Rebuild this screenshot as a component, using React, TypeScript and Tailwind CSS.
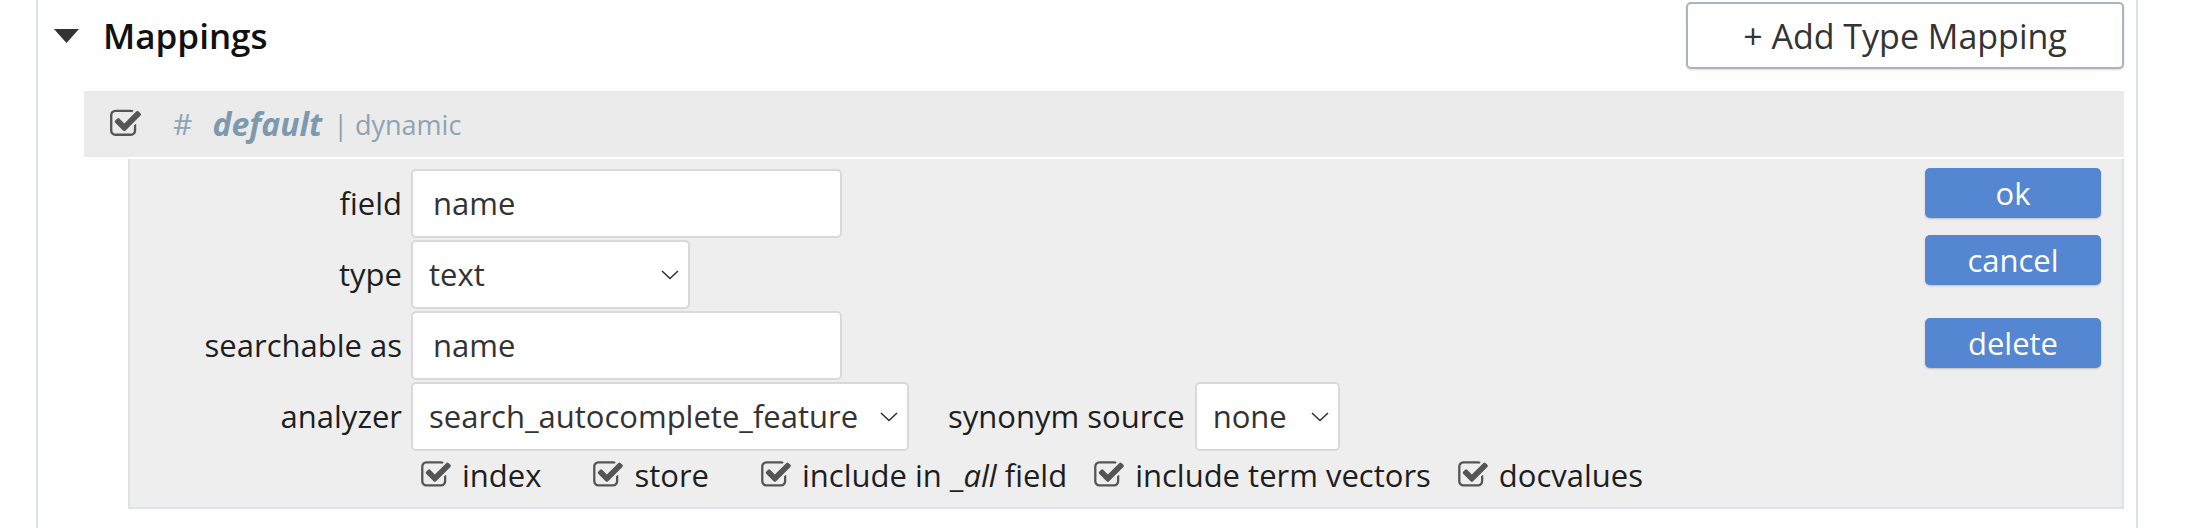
import React from "react";

const CheckSquare = ({ className }: { className?: string }) => (
  <svg viewBox="0 0 1664 1792" className={className} fill="currentColor">
    <path d="M1408 930v318q0 119-84.5 203.5t-203.5 84.5h-832q-119 0-203.5-84.5t-84.5-203.5v-832q0-119 84.5-203.5t203.5-84.5h832q63 0 117 25 15 7 18 23 3 17-9 29l-49 49q-10 10-23 10-3 0-9-2-23-6-45-6h-832q-66 0-113 47t-47 113v832q0 66 47 113t113 47h832q66 0 113-47t47-113v-254q0-13 9-22l64-64q10-10 23-10 6 0 12 3 20 8 20 29zm231-489l-814 814q-24 24-57 24t-57-24l-430-430q-24-24-24-57t24-57l110-110q24-24 57-24t57 24l263 263 647-647q24-24 57-24t57 24l110 110q24 24 24 57t-24 57z" />
  </svg>
);

const Chevron = () => (
  <svg width="18" height="10" viewBox="0 0 18 10" className="shrink-0">
    <path d="M1 1 L9 8.5 L17 1" fill="none" stroke="#333" strokeWidth="1.6" />
  </svg>
);

const Label = ({ children }: { children: React.ReactNode }) => (
  <div className="flex items-center justify-end text-[31px] text-[#1e1e1e] leading-none">{children}</div>
);

const TextBox = ({ value, w }: { value: string; w: string }) => (
  <div className={`${w} h-[69px] bg-white border-2 border-[#d9d9d9] rounded-[5px] flex items-center pl-[20px] text-[31px] text-[#333] leading-none`}>
    {value}
  </div>
);

const SelectBox = ({ value, w }: { value: string; w: string }) => (
  <div className={`${w} h-[69px] bg-white border-2 border-[#d9d9d9] rounded-[5px] flex items-center justify-between pl-[16px] pr-[9px] text-[31px] text-[#333] leading-none`}>
    <span>{value}</span>
    <Chevron />
  </div>
);

const Check = ({ children, mr }: { children: React.ReactNode; mr: string }) => (
  <div className={`flex items-center ${mr}`}>
    <CheckSquare className="w-[30px] h-[32px] text-[#555]" />
    <span className="ml-[11px] text-[31px] text-[#1e1e1e] leading-none">{children}</span>
  </div>
);

export default function App() {
  return (
    <div className="w-[2200px] h-[528px] bg-white overflow-hidden font-['Open_Sans',sans-serif]">
      <div className="ml-[36px] w-[2102px] h-[528px] border-x-2 border-[#dde1ea] pr-[12px]">
        <div className="flex items-center pt-[2px]">
          <svg width="25" height="14" viewBox="0 0 25 14" className="ml-[16px]">
            <polygon points="0,0 25,0 12.5,14" fill="#333" />
          </svg>
          <span className="ml-[24px] text-[35px] font-semibold text-[#111] leading-none">Mappings</span>
          <button className="ml-auto w-[438px] h-[67px] bg-white border-2 border-[#aab3c0] rounded-[5px] shadow-[0_1px_2px_rgba(0,0,0,0.15)] text-[34px] text-[#333] leading-none">
            + Add Type Mapping
          </button>
        </div>

        <div className="ml-[46px] mt-[22px]">
          <div className="h-[66px] bg-[#ebebeb] flex items-center pl-[26px]">
            <CheckSquare className="w-[31px] h-[34px] text-[#555]" />
            <span className="ml-[32px] text-[30px] text-[#8ea3b4] leading-none">#</span>
            <span className="ml-[20px] text-[32px] font-bold italic text-[#7d99ae] leading-none">default</span>
            <span className="ml-[11px] text-[27px] text-[#8ea3b4] leading-none">| dynamic</span>
          </div>

          <div className="ml-[44px] mt-[2px] h-[350px] bg-[#eeeeee] border-x-2 border-b-2 border-[#dde2ea] flex">
            <div className="flex-1 pt-[10px]">
              <div className="grid grid-cols-[272px_auto] gap-x-[9px] gap-y-[2px] justify-start">
                <Label>field</Label>
                <TextBox value="name" w="w-[431px]" />
                <Label>type</Label>
                <SelectBox value="text" w="w-[279px]" />
                <Label>searchable as</Label>
                <TextBox value="name" w="w-[431px]" />
                <Label>analyzer</Label>
                <div className="flex items-center">
                  <SelectBox value="search_autocomplete_feature" w="w-[498px]" />
                  <span className="ml-[39px] text-[31px] text-[#1e1e1e] leading-none">synonym source</span>
                  <div className="ml-[10px]">
                    <SelectBox value="none" w="w-[145px]" />
                  </div>
                </div>
              </div>
              <div className="flex items-center ml-[291px] mt-[7px] h-[34px]">
                <Check mr="mr-[52px]">index</Check>
                <Check mr="mr-[52px]">store</Check>
                <Check mr="mr-[27px]">
                  include in _<i>all</i> field
                </Check>
                <Check mr="mr-[27px]">include term vectors</Check>
                <Check mr="">docvalues</Check>
              </div>
            </div>
            <div className="flex flex-col pt-[9px] pr-[21px]">
              <button className="w-[176px] h-[50px] bg-[#5486d1] rounded-[5px] shadow-[0_1px_2px_rgba(0,0,0,0.2)] text-white text-[31px] leading-none">ok</button>
              <button className="mt-[17px] w-[176px] h-[50px] bg-[#5486d1] rounded-[5px] shadow-[0_1px_2px_rgba(0,0,0,0.2)] text-white text-[31px] leading-none">cancel</button>
              <button className="mt-[33px] w-[176px] h-[50px] bg-[#5486d1] rounded-[5px] shadow-[0_1px_2px_rgba(0,0,0,0.2)] text-white text-[31px] leading-none">delete</button>
            </div>
          </div>
        </div>
      </div>
    </div>
  );
}
